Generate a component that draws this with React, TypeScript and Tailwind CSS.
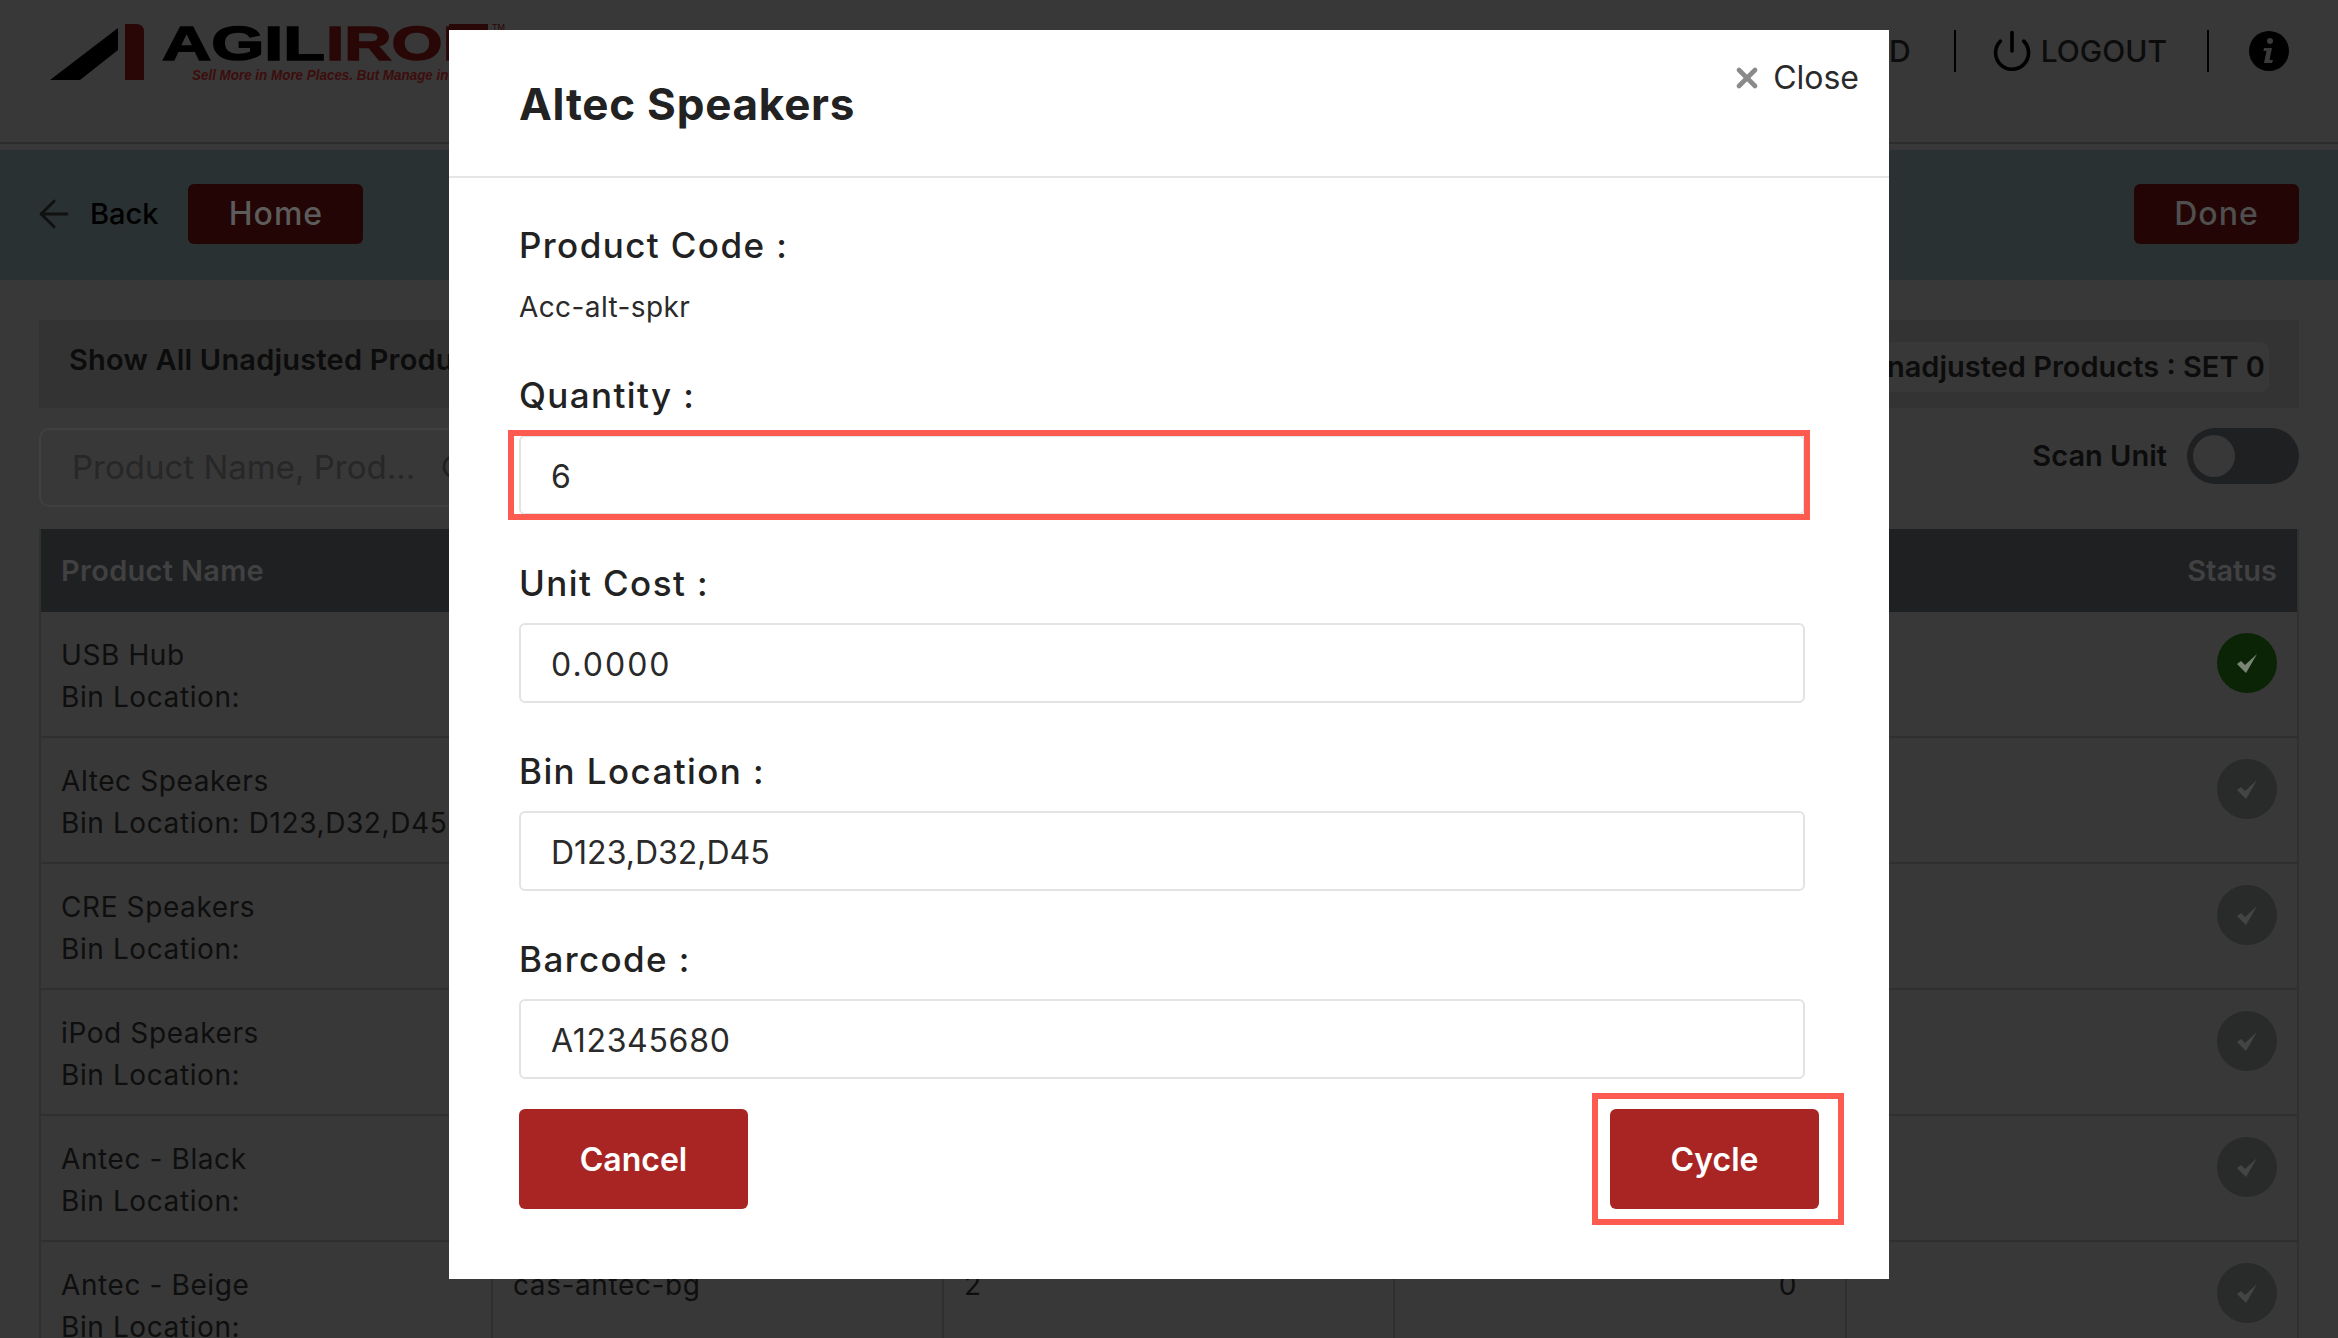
import React from "react";
import { ArrowLeft, Power, Search, X } from "lucide-react";

const rows = [
  { name: "USB Hub", bin: "Bin Location:", code: "", qty: "", count: "", done: true },
  { name: "Altec Speakers", bin: "Bin Location: D123,D32,D45", code: "", qty: "", count: "", done: false },
  { name: "CRE Speakers", bin: "Bin Location:", code: "", qty: "", count: "", done: false },
  { name: "iPod Speakers", bin: "Bin Location:", code: "", qty: "", count: "", done: false },
  { name: "Antec - Black", bin: "Bin Location:", code: "", qty: "", count: "", done: false },
  { name: "Antec - Beige", bin: "Bin Location:", code: "cas-antec-bg", qty: "2", count: "0", done: false },
];

function Logo() {
  return (
    <svg width="510" height="90" viewBox="0 0 510 90" className="absolute left-0 top-0">
      <polygon points="50,80 118,28 118,50 80,80" fill="#000" />
      <path d="M125 24 H136 Q144 24 144 32 V80 H125 Z" fill="#2a0707" />
      <text x="162" y="60" fontFamily="'Liberation Sans', sans-serif" fontWeight="700" fontSize="49" textLength="163" lengthAdjust="spacingAndGlyphs" fill="#000" stroke="#000" strokeWidth="1.5">AGIL</text>
      <text x="326" y="60" fontFamily="'Liberation Sans', sans-serif" fontWeight="700" fontSize="49" textLength="164" lengthAdjust="spacingAndGlyphs" fill="#2a0707" stroke="#2a0707" strokeWidth="1.5">IRON</text>
      <rect x="449" y="24" width="39" height="6" fill="#2a0707" />
      <text x="492" y="30" fontFamily="'Liberation Sans', sans-serif" fontSize="9" fill="#2a0707">TM</text>
      <text x="192" y="80" fontFamily="'Liberation Sans', sans-serif" fontStyle="italic" fontWeight="700" fontSize="14" textLength="290" lengthAdjust="spacingAndGlyphs" fill="#3d0d0d">Sell More in More Places. But Manage in One.</text>
    </svg>
  );
}

function InfoIcon() {
  return (
    <svg width="40" height="40" viewBox="0 0 40 40">
      <circle cx="20" cy="20" r="20" fill="#000" />
      <circle cx="21" cy="10" r="3" fill="#3a3a3a" />
      <path d="M15 17 H23 L20.5 29 H24 L23 32 H15 L17.500 20 H14.500 Z" fill="#3a3a3a" />
    </svg>
  );
}

function TaperCheck({ color }: { color: string }) {
  return (
    <svg width="20" height="19" viewBox="0 0 20 19">
      <polygon points="0,10 4,7 8,11 20,0 9,19" fill={color} />
    </svg>
  );
}

function Field({ label, value, spacing }: { label: string; value: string; spacing: string }) {
  return (
    <div className="flex flex-col">
      <div className="h-10 text-[35px] font-medium leading-10 tracking-[1.4px] text-[#222222]">{label}</div>
      <input
        readOnly
        value={value}
        className={`mt-5 h-20 w-[1286px] rounded-md border-2 border-[#e3e3e3] bg-white px-[30px] pt-0.5 text-[32px] text-[#2a2a2a] outline-none ${spacing}`}
      />
    </div>
  );
}

export default function App() {
  return (
    <div className="relative h-[1338px] w-[2338px] overflow-hidden bg-[#383838] font-['Inter','Liberation_Sans',sans-serif] text-[#0c0c0c]">
      <header className="relative flex h-[144px] items-start justify-end border-b-2 border-[#2c2c2c] pr-[49px] pt-[30px]">
        <Logo />
        <div className="flex h-[42px] items-center">
          <span className="text-[30px] font-medium">D</span>
          <div className="ml-[43px] h-[42px] w-0.5 bg-black" />
          <Power className="ml-[34px] h-11 w-11" strokeWidth={2} color="#000" />
          <span className="ml-[7px] text-[30px] font-medium">LOGOUT</span>
          <div className="ml-[40px] h-[42px] w-0.5 bg-black" />
          <div className="ml-[40px]"><InfoIcon /></div>
        </div>
      </header>

      <div className="mt-1.5 flex h-[130px] items-center justify-between bg-[#2a3133] pb-0.5 pl-8 pr-[39px]">
        <div className="flex items-center">
          <ArrowLeft className="h-11 w-11" strokeWidth={1.6} color="#111" />
          <span className="ml-3.5 text-[29px] font-medium text-black">Back</span>
          <button className="ml-[30px] h-[60px] w-[175px] rounded-md bg-[#240505] text-[32px] font-medium tracking-[1px] text-[#5c5c5c]">Home</button>
        </div>
        <button className="h-[60px] w-[165px] rounded-md bg-[#240505] text-[32px] font-medium tracking-[1px] text-[#4f4f4f]">Done</button>
      </div>

      <div className="mx-[39px] mt-10 flex h-[88px] items-start justify-between bg-[#333333] pl-[30px] pr-[30px]">
        <span className="mt-[20px] text-[29px] font-semibold leading-10 tracking-[0.2px]">Show All Unadjusted Products</span>
        <span className="mt-[22px] flex h-[50px] items-center rounded-lg bg-[#383838] px-1 text-[29px] font-semibold">Unadjusted Products : SET 0</span>
      </div>

      <div className="mx-[39px] mt-5 flex h-[79px] items-center justify-between">
        <div className="flex h-[79px] w-[500px] items-center rounded-[10px] border-2 border-[#404040] pl-[31px]">
          <span className="text-[33px] text-[#272727]">Product Name, Prod...</span>
          <Search className="ml-[25px] h-8 w-8" color="#222" />
        </div>
        <div className="flex items-center self-start">
          <span className="text-[29px] font-semibold">Scan Unit</span>
          <div className="ml-5 flex h-14 w-[112px] items-center rounded-full bg-[#1f2022] pl-1.5">
            <div className="h-[42px] w-[42px] rounded-full bg-[#383838]" />
          </div>
        </div>
      </div>

      <div className="mx-[39px] mt-[22px] border-x-2 border-[#303030]">
        <div className="grid h-[83px] grid-cols-[452px_451px_451px_452px_1fr] items-center bg-[#1f2022] text-[29px] font-semibold tracking-[0.3px] text-[#414141]">
          <span className="pl-5">Product Name</span>
          <span />
          <span />
          <span />
          <span className="pr-[20px] text-right tracking-normal">Status</span>
        </div>
        {rows.map((r) => (
          <div key={r.name} className="grid h-[126px] grid-cols-[452px_451px_451px_452px_1fr] border-b-2 border-[#2f2f2f] text-[28px] tracking-[0.6px] text-[#0e0e0e]">
            <div className="border-r-2 border-[#2f2f2f] pl-5 pt-[22px] leading-[42px]">
              <div>{r.name}</div>
              <div>{r.bin}</div>
            </div>
            <div className="border-r-2 border-[#2f2f2f] pl-5 pt-[22px] leading-[42px]">{r.code}</div>
            <div className="border-r-2 border-[#2f2f2f] pl-5 pt-[22px] leading-[42px]">{r.qty}</div>
            <div className="border-r-2 border-[#2f2f2f] pr-12 pt-[22px] text-right leading-[42px]">{r.count}</div>
            <div className="flex justify-end pr-[20px] pt-[21px]">
              <div className={`flex h-[60px] w-[60px] items-center justify-center rounded-full ${r.done ? "bg-[#0c2406]" : "bg-[#292b2a]"}`}>
                <TaperCheck color={r.done ? "#7a8576" : "#444444"} />
              </div>
            </div>
          </div>
        ))}
      </div>

      <div className="absolute left-[449px] top-[30px] w-[1440px] bg-white">
        <div className="flex h-[148px] items-start justify-between border-b-2 border-[#e6e6e6] pl-[70px] pr-[30px]">
          <h2 className="mt-[48px] text-[44px] font-bold leading-[52px] tracking-[0.75px] text-[#222222]">Altec Speakers</h2>
          <div className="mt-[28px] flex h-10 items-center text-[32px] text-[#2a2a2a]">
            <X className="h-8 w-8" strokeWidth={3.5} color="#8a8a8a" />
            <span className="ml-2.5">Close</span>
          </div>
        </div>
        <div className="px-[70px] pb-[70px] pt-[47px]">
          <div className="h-10 text-[35px] font-medium leading-10 tracking-[1.4px] text-[#222222]">Product Code :</div>
          <div className="mt-[22px] h-10 text-[28px] leading-10 tracking-[0.4px] text-[#2a2a2a]">Acc-alt-spkr</div>
          <div className="mt-12 flex flex-col gap-12">
            <div className="relative">
              <Field label="Quantity :" value="6" spacing="" />
              <div className="absolute -left-[11px] bottom-[-5px] right-[9px] h-[90px] border-[6px] border-[#fd5b50]" />
            </div>
            <Field label="Unit Cost :" value="0.0000" spacing="tracking-[2px]" />
            <Field label="Bin Location :" value="D123,D32,D45" spacing="" />
            <Field label="Barcode :" value="A12345680" spacing="tracking-[0.7px]" />
          </div>
          <div className="mt-[30px] flex items-start justify-between">
            <button className="h-[100px] w-[229px] rounded-md bg-[#a92524] pt-0.5 text-[32px] font-semibold text-white">Cancel</button>
            <div className="relative">
              <button className="h-[100px] w-[209px] rounded-md bg-[#a92524] pt-0.5 text-[32px] font-semibold text-white">Cycle</button>
              <div className="absolute -bottom-4 -left-[18px] -right-[25px] -top-4 border-[6px] border-[#fd5b50]" />
            </div>
          </div>
        </div>
      </div>
    </div>
  );
}
